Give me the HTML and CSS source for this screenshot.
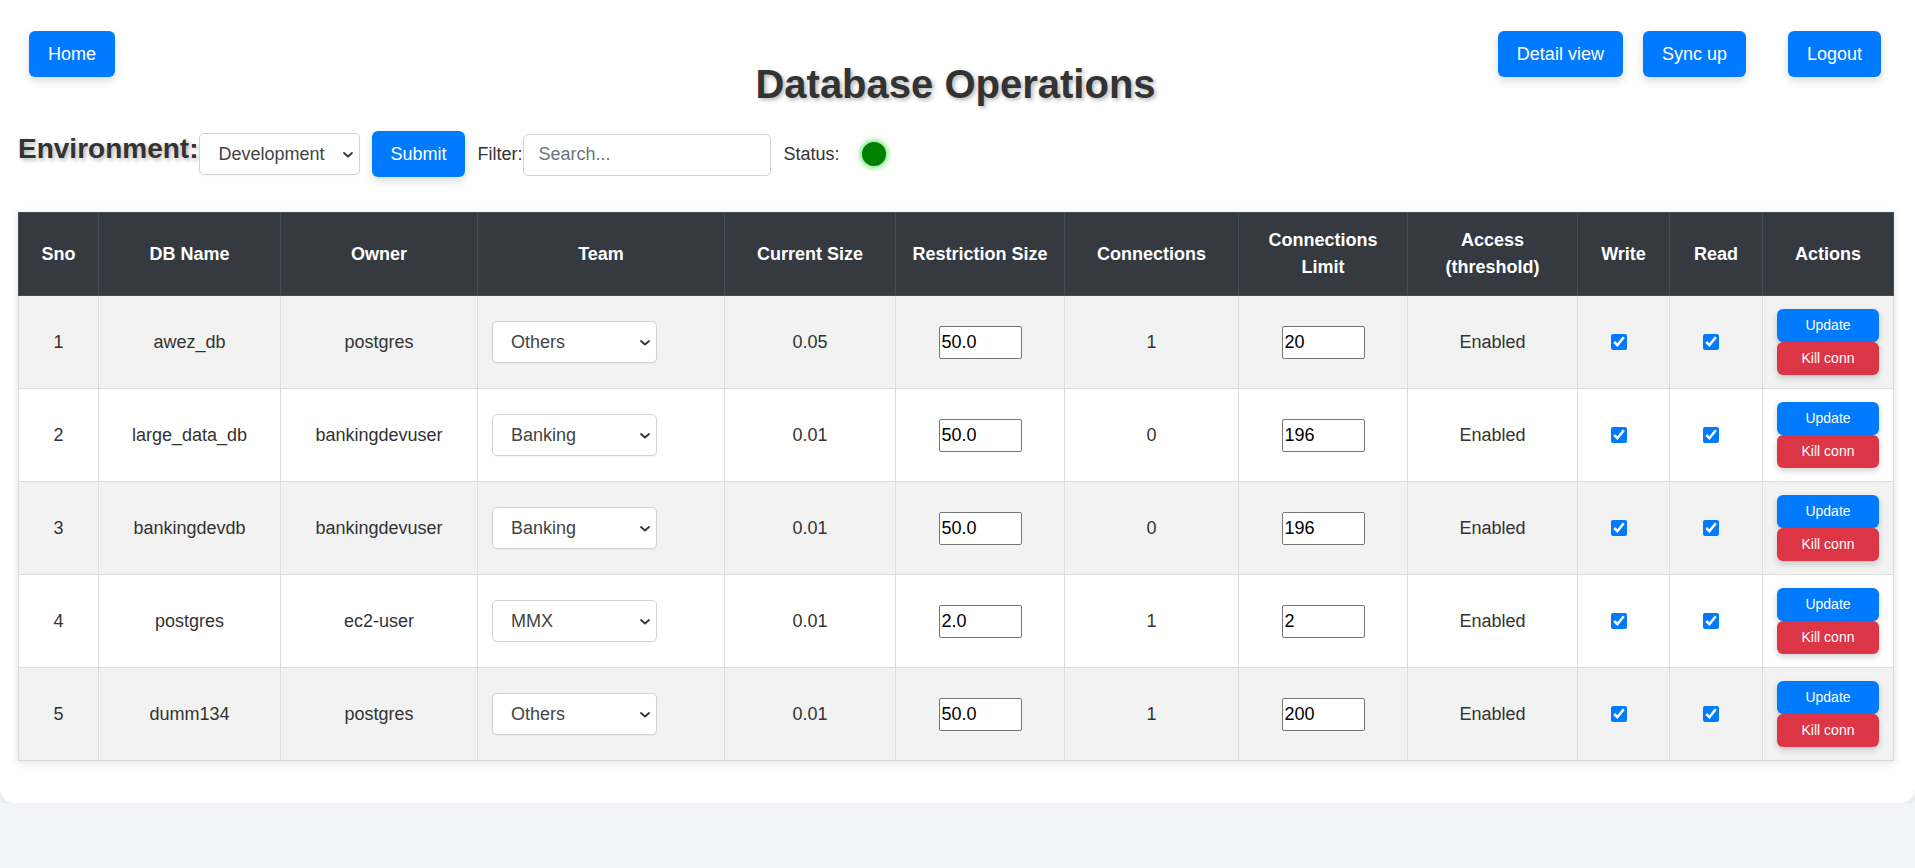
FILE: index.html
```html
<!DOCTYPE html>
<html lang="en">
<head>
<meta charset="utf-8">
<title>Database Operations</title>
<link rel="stylesheet" href="styles.css">
</head>
<body>
<div class="container">
  <header class="topbar">
    <div class="left"><button class="btn">Home</button></div>
    <h1 class="title">Database Operations</h1>
    <div class="right">
      <button class="btn">Detail view</button>
      <button class="btn">Sync up</button>
      <button class="btn logout">Logout</button>
    </div>
  </header>

  <div class="envrow">
    <label class="envlabel">Environment:</label>
    <span class="selwrap envwrap">
      <select class="sel envselect">
        <option selected>Development</option>
        <option>Production</option>
      </select>
      <svg class="chev" width="10" height="6" viewBox="0 0 10 6"><path d="M1 1l4 3.5L9 1" fill="none" stroke="#333" stroke-width="1.8" stroke-linecap="round" stroke-linejoin="round"/></svg>
    </span>
    <button class="btn submit">Submit</button>
    <span class="filterlabel">Filter:</span>
    <input class="search" type="text" placeholder="Search...">
    <span class="statuslabel">Status:</span>
    <span class="dot"></span>
  </div>

  <table class="dbtable">
    <colgroup>
      <col class="c-sno"><col class="c-name"><col class="c-owner"><col class="c-team">
      <col class="c-cur"><col class="c-res"><col class="c-conn"><col class="c-lim">
      <col class="c-acc"><col class="c-w"><col class="c-r"><col class="c-act">
    </colgroup>
    <thead>
      <tr>
        <th>Sno</th><th>DB Name</th><th>Owner</th><th>Team</th><th>Current Size</th>
        <th>Restriction Size</th><th>Connections</th><th>Connections Limit</th>
        <th>Access (threshold)</th><th>Write</th><th>Read</th><th>Actions</th>
      </tr>
    </thead>
    <tbody>
      <tr>
        <td>1</td><td>awez_db</td><td>postgres</td>
        <td class="teamcell"><span class="selwrap"><select class="sel teamselect"><option selected>Others</option><option>Banking</option><option>MMX</option></select><svg class="chev" width="10" height="6" viewBox="0 0 10 6"><path d="M1 1l4 3.5L9 1" fill="none" stroke="#333" stroke-width="1.8" stroke-linecap="round" stroke-linejoin="round"/></svg></span></td>
        <td>0.05</td><td><input class="num" type="text" value="50.0"></td><td>1</td>
        <td><input class="num" type="text" value="20"></td><td>Enabled</td>
        <td><input class="cb" type="checkbox" checked></td><td><input class="cb" type="checkbox" checked></td>
        <td class="actions"><button class="abtn update">Update</button><button class="abtn kill">Kill conn</button></td>
      </tr>
      <tr>
        <td>2</td><td>large_data_db</td><td>bankingdevuser</td>
        <td class="teamcell"><span class="selwrap"><select class="sel teamselect"><option>Others</option><option selected>Banking</option><option>MMX</option></select><svg class="chev" width="10" height="6" viewBox="0 0 10 6"><path d="M1 1l4 3.5L9 1" fill="none" stroke="#333" stroke-width="1.8" stroke-linecap="round" stroke-linejoin="round"/></svg></span></td>
        <td>0.01</td><td><input class="num" type="text" value="50.0"></td><td>0</td>
        <td><input class="num" type="text" value="196"></td><td>Enabled</td>
        <td><input class="cb" type="checkbox" checked></td><td><input class="cb" type="checkbox" checked></td>
        <td class="actions"><button class="abtn update">Update</button><button class="abtn kill">Kill conn</button></td>
      </tr>
      <tr>
        <td>3</td><td>bankingdevdb</td><td>bankingdevuser</td>
        <td class="teamcell"><span class="selwrap"><select class="sel teamselect"><option>Others</option><option selected>Banking</option><option>MMX</option></select><svg class="chev" width="10" height="6" viewBox="0 0 10 6"><path d="M1 1l4 3.5L9 1" fill="none" stroke="#333" stroke-width="1.8" stroke-linecap="round" stroke-linejoin="round"/></svg></span></td>
        <td>0.01</td><td><input class="num" type="text" value="50.0"></td><td>0</td>
        <td><input class="num" type="text" value="196"></td><td>Enabled</td>
        <td><input class="cb" type="checkbox" checked></td><td><input class="cb" type="checkbox" checked></td>
        <td class="actions"><button class="abtn update">Update</button><button class="abtn kill">Kill conn</button></td>
      </tr>
      <tr>
        <td>4</td><td>postgres</td><td>ec2-user</td>
        <td class="teamcell"><span class="selwrap"><select class="sel teamselect"><option>Others</option><option>Banking</option><option selected>MMX</option></select><svg class="chev" width="10" height="6" viewBox="0 0 10 6"><path d="M1 1l4 3.5L9 1" fill="none" stroke="#333" stroke-width="1.8" stroke-linecap="round" stroke-linejoin="round"/></svg></span></td>
        <td>0.01</td><td><input class="num" type="text" value="2.0"></td><td>1</td>
        <td><input class="num" type="text" value="2"></td><td>Enabled</td>
        <td><input class="cb" type="checkbox" checked></td><td><input class="cb" type="checkbox" checked></td>
        <td class="actions"><button class="abtn update">Update</button><button class="abtn kill">Kill conn</button></td>
      </tr>
      <tr>
        <td>5</td><td>dumm134</td><td>postgres</td>
        <td class="teamcell"><span class="selwrap"><select class="sel teamselect"><option selected>Others</option><option>Banking</option><option>MMX</option></select><svg class="chev" width="10" height="6" viewBox="0 0 10 6"><path d="M1 1l4 3.5L9 1" fill="none" stroke="#333" stroke-width="1.8" stroke-linecap="round" stroke-linejoin="round"/></svg></span></td>
        <td>0.01</td><td><input class="num" type="text" value="50.0"></td><td>1</td>
        <td><input class="num" type="text" value="200"></td><td>Enabled</td>
        <td><input class="cb" type="checkbox" checked></td><td><input class="cb" type="checkbox" checked></td>
        <td class="actions"><button class="abtn update">Update</button><button class="abtn kill">Kill conn</button></td>
      </tr>
    </tbody>
  </table>
</div>
</body>
</html>
```

FILE: styles.css
```css
* { box-sizing: border-box; }

html, body {
  margin: 0;
  padding: 0;
}

body {
  background: #f4f5f8;
  font-family: "Liberation Sans", Arial, sans-serif;
  color: #333;
}

.container {
  background: #fff;
  padding: 31px 22px 42px 18px;
  border-radius: 0 0 14px 14px;
  box-shadow: 0 4px 12px rgba(0, 0, 0, 0.08);
}

.topbar {
  display: grid;
  grid-template-columns: 1fr auto 1fr;
  align-items: start;
}

.left {
  padding-left: 11px;
}

.right {
  display: flex;
  justify-content: flex-end;
  gap: 20px;
  padding-right: 12px;
}

.btn {
  font-family: "Liberation Sans", Arial, sans-serif;
  font-size: 18px;
  line-height: 22px;
  padding: 12px 19px;
  color: #fff;
  background: #007bff;
  border: none;
  border-radius: 6px;
  box-shadow: 0 4px 8px rgba(0, 0, 0, 0.15);
  cursor: pointer;
}

.logout {
  margin-left: 22px;
}

.title {
  margin: 30px 0 0;
  font-size: 40px;
  line-height: 46px;
  font-weight: bold;
  color: #333;
  text-shadow: 2px 2px 4px rgba(0, 0, 0, 0.3);
  text-align: center;
}

.envrow {
  display: flex;
  align-items: baseline;
  margin-top: 24px;
}

.envlabel {
  font-size: 28px;
  font-weight: bold;
  color: #333;
  text-shadow: 2px 2px 4px rgba(0, 0, 0, 0.3);
  position: relative;
  top: -2px;
}

.selwrap {
  position: relative;
  display: inline-block;
}

.sel {
  appearance: none;
  -webkit-appearance: none;
  height: 42px;
  padding: 0 24px 0 18px;
  font-family: "Liberation Sans", Arial, sans-serif;
  font-size: 18px;
  color: #444;
  background: #fff;
  border: 1px solid #ced4da;
  border-radius: 5px;
  box-shadow: 0 1px 2px rgba(0, 0, 0, 0.04);
}

.chev {
  position: absolute;
  right: 7px;
  top: 50%;
  margin-top: -2px;
  pointer-events: none;
}

.envwrap {
  margin-left: 1px;
}

.envselect {
  width: 161px;
}

.teamselect {
  width: 165px;
}

.submit {
  margin-left: 12px;
  padding: 12px 18px;
}

.filterlabel {
  margin-left: 13px;
  font-size: 18px;
}

.search {
  width: 248px;
  height: 42px;
  margin-left: 0;
  padding: 0 15px;
  font-family: "Liberation Sans", Arial, sans-serif;
  font-size: 18px;
  color: #495057;
  border: 1px solid #ced4da;
  border-radius: 5px;
}

.search::placeholder {
  color: #6c757d;
}

.statuslabel {
  margin-left: 13px;
  font-size: 18px;
}

.dot {
  align-self: center;
  width: 24px;
  height: 24px;
  margin-left: 22px;
  border-radius: 50%;
  background: #008000;
  box-shadow: 0 0 6px 1px rgba(0, 200, 0, 0.7);
}

.dbtable {
  width: 1875px;
  margin-top: 35px;
  border-collapse: collapse;
  table-layout: fixed;
  box-shadow: 0 2px 8px rgba(0, 0, 0, 0.12);
}

.c-sno { width: 80px; }
.c-name { width: 182px; }
.c-owner { width: 197px; }
.c-team { width: 247px; }
.c-cur { width: 171px; }
.c-res { width: 169px; }
.c-conn { width: 174px; }
.c-lim { width: 169px; }
.c-acc { width: 170px; }
.c-w { width: 92px; }
.c-r { width: 93px; }
.c-act { width: 131px; }

.dbtable th {
  background: #343a40;
  color: #fff;
  font-size: 18px;
  font-weight: bold;
  line-height: 27px;
  padding: 14px 14px;
  border: 1px solid #454d55;
  text-align: center;
  vertical-align: middle;
}

.dbtable td {
  font-size: 18px;
  color: #333;
  padding: 13px 14px;
  border: 1px solid #dddddd;
  text-align: center;
  vertical-align: middle;
  height: 93px;
}

.dbtable tbody tr:nth-child(odd) td {
  background: #f2f2f2;
}

.dbtable tbody tr:nth-child(even) td {
  background: #fff;
}

.dbtable td.teamcell {
  text-align: left;
}

.num {
  width: 83px;
  height: 33px;
  padding: 1px 2px;
  font-family: "Liberation Sans", Arial, sans-serif;
  font-size: 18px;
  color: #000;
  background: #fff;
  border: 1px solid #767676;
  border-radius: 2px;
}

.cb {
  width: 16px;
  height: 16px;
  margin: 3px 13px 3px 3px;
  vertical-align: middle;
  accent-color: #007bff;
}

.actions {
  padding: 13px 14px;
}

.abtn {
  display: block;
  width: 100%;
  height: 33px;
  padding: 8px 4px;
  font-family: "Liberation Sans", Arial, sans-serif;
  font-size: 14px;
  line-height: 17px;
  color: #fff;
  border: none;
  border-radius: 6px;
  box-shadow: 0 3px 6px rgba(0, 0, 0, 0.18);
  cursor: pointer;
}

.update {
  background: #007bff;
}

.kill {
  background: #dc3545;
}
```
